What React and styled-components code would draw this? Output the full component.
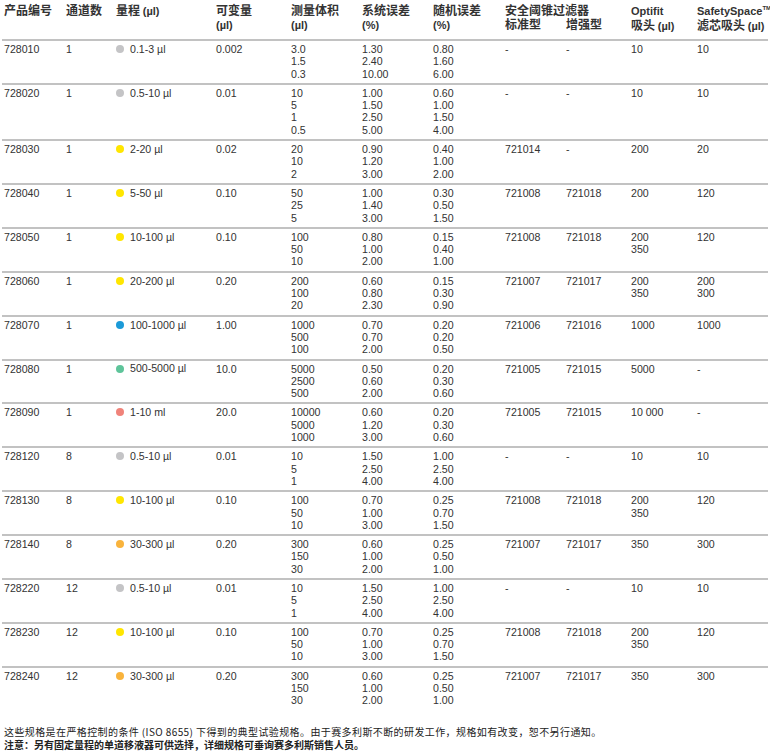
import styled, { createGlobalStyle } from "styled-components";

const GlobalStyle = createGlobalStyle`
  body {
    margin: 0;
    background: #fff;
    color: #333;
    font-family: "Liberation Sans", "Noto Sans CJK SC", sans-serif;
  }
`;

const COLS = "62px 50px 100px 75px 71px 71px 72px 61px 65px 66px 1fr";

const DOT = {
  gray: "#c4c4c6",
  yellow: "#ffe600",
  blue: "#1b9ad8",
  green: "#5ec49a",
  red: "#f0837a",
  orange: "#f9b33c"
};

const rows = [
  ["728010", "1", "gray", "0.1-3 µl", "0.002", ["3.0", "1.5", "0.3"], ["1.30", "2.40", "10.00"], ["0.80", "1.60", "6.00"], "-", "-", ["10"], ["10"]],
  ["728020", "1", "gray", "0.5-10 µl", "0.01", ["10", "5", "1", "0.5"], ["1.00", "1.50", "2.50", "5.00"], ["0.60", "1.00", "1.50", "4.00"], "-", "-", ["10"], ["10"]],
  ["728030", "1", "yellow", "2-20 µl", "0.02", ["20", "10", "2"], ["0.90", "1.20", "3.00"], ["0.40", "1.00", "2.00"], "721014", "-", ["200"], ["20"]],
  ["728040", "1", "yellow", "5-50 µl", "0.10", ["50", "25", "5"], ["1.00", "1.40", "3.00"], ["0.30", "0.50", "1.50"], "721008", "721018", ["200"], ["120"]],
  ["728050", "1", "yellow", "10-100 µl", "0.10", ["100", "50", "10"], ["0.80", "1.00", "2.00"], ["0.15", "0.40", "1.00"], "721008", "721018", ["200", "350"], ["120"]],
  ["728060", "1", "yellow", "20-200 µl", "0.20", ["200", "100", "20"], ["0.60", "0.80", "2.30"], ["0.15", "0.30", "0.90"], "721007", "721017", ["200", "350"], ["200", "300"]],
  ["728070", "1", "blue", "100-1000 µl", "1.00", ["1000", "500", "100"], ["0.70", "0.70", "2.00"], ["0.20", "0.20", "0.50"], "721006", "721016", ["1000"], ["1000"]],
  ["728080", "1", "green", "500-5000 µl", "10.0", ["5000", "2500", "500"], ["0.50", "0.60", "2.00"], ["0.20", "0.30", "0.60"], "721005", "721015", ["5000"], ["-"]],
  ["728090", "1", "red", "1-10 ml", "20.0", ["10000", "5000", "1000"], ["0.60", "1.20", "3.00"], ["0.20", "0.30", "0.60"], "721005", "721015", ["10 000"], ["-"]],
  ["728120", "8", "gray", "0.5-10 µl", "0.01", ["10", "5", "1"], ["1.50", "2.50", "4.00"], ["1.00", "2.50", "4.00"], "-", "-", ["10"], ["10"]],
  ["728130", "8", "yellow", "10-100 µl", "0.10", ["100", "50", "10"], ["0.70", "1.00", "3.00"], ["0.25", "0.70", "1.50"], "721008", "721018", ["200", "350"], ["120"]],
  ["728140", "8", "orange", "30-300 µl", "0.20", ["300", "150", "30"], ["0.60", "1.00", "2.00"], ["0.25", "0.50", "1.00"], "721007", "721017", ["350"], ["300"]],
  ["728220", "12", "gray", "0.5-10 µl", "0.01", ["10", "5", "1"], ["1.50", "2.50", "4.00"], ["1.00", "2.50", "4.00"], "-", "-", ["10"], ["10"]],
  ["728230", "12", "yellow", "10-100 µl", "0.10", ["100", "50", "10"], ["0.70", "1.00", "3.00"], ["0.25", "0.70", "1.50"], "721008", "721018", ["200", "350"], ["120"]],
  ["728240", "12", "orange", "30-300 µl", "0.20", ["300", "150", "30"], ["0.60", "1.00", "2.00"], ["0.25", "0.50", "1.00"], "721007", "721017", ["350"], ["300"]]
];

const Page = styled.div`
  padding: 3px 2px 0 2px;
`;

const Head = styled.div`
  display: grid;
  grid-template-columns: ${COLS};
  padding: 0 2px 6px 2px;
  font-family: "Noto Sans CJK SC", sans-serif;
  font-size: 12px;
  font-weight: 700;
  line-height: 14px;
  color: #333;
`;

const HeadCell = styled.div`
  grid-column: ${({ $span }) => ($span ? `span ${$span}` : "auto")};
  white-space: nowrap;
`;

const Latin = styled.span`
  font-family: "Liberation Sans", sans-serif;
  font-size: 11px;
`;

const SubHead = styled.div`
  display: grid;
  grid-template-columns: 61px 1fr;
`;

const Tm = styled.sup`
  font-size: 6px;
  vertical-align: 5px;
  line-height: 0;
`;

const Row = styled.div`
  display: grid;
  grid-template-columns: ${COLS};
  border-top: 2px solid #c2c2c2;
  padding: 2px 2px 3px 2px;
  font-size: 10.6px;
  line-height: 12.3px;
`;

const Cell = styled.div`
  display: flex;
  flex-direction: column;
  white-space: nowrap;
`;

const Range = styled.div`
  display: flex;
  align-items: center;
  gap: 6px;
  height: 12px;
  white-space: nowrap;
`;

const Dot = styled.span`
  width: 8px;
  height: 8px;
  border-radius: 50%;
  background: ${({ $color }) => DOT[$color]};
`;

const Notes = styled.div`
  margin-top: 15px;
  padding-left: 2px;
  font-family: "Noto Sans CJK SC", sans-serif;
  font-size: 10px;
  line-height: 13px;
  color: #222;
`;

const Note = styled.div`
  font-weight: ${({ $bold }) => ($bold ? 700 : 400)};
  letter-spacing: ${({ $spacing }) => $spacing || 0}px;
  white-space: nowrap;
`;

const Lines = ({ items }) => (
  <Cell>
    {items.map((t, i) => (
      <span key={i}>{t}</span>
    ))}
  </Cell>
);

const App = () => (
  <Page>
    <GlobalStyle />
    <Head>
      <HeadCell>产品编号</HeadCell>
      <HeadCell>通道数</HeadCell>
      <HeadCell>
        量程 <Latin>(µl)</Latin>
      </HeadCell>
      <HeadCell>
        可变量
        <br />
        <Latin>(µl)</Latin>
      </HeadCell>
      <HeadCell>
        测量体积
        <br />
        <Latin>(µl)</Latin>
      </HeadCell>
      <HeadCell>
        系统误差
        <br />
        <Latin>(%)</Latin>
      </HeadCell>
      <HeadCell>
        随机误差
        <br />
        <Latin>(%)</Latin>
      </HeadCell>
      <HeadCell $span={2}>
        安全阈锥过滤器
        <SubHead>
          <span>标准型</span>
          <span>增强型</span>
        </SubHead>
      </HeadCell>
      <HeadCell>
        <Latin>Optifit</Latin>
        <br />
        吸头 <Latin>(µl)</Latin>
      </HeadCell>
      <HeadCell>
        <Latin>
          SafetySpace<Tm>TM</Tm>
        </Latin>
        <br />
        滤芯吸头 <Latin>(µl)</Latin>
      </HeadCell>
    </Head>
    {rows.map(r => (
      <Row key={r[0]}>
        <Cell>{r[0]}</Cell>
        <Cell>{r[1]}</Cell>
        <Range>
          <Dot $color={r[2]} />
          {r[3]}
        </Range>
        <Cell>{r[4]}</Cell>
        <Lines items={r[5]} />
        <Lines items={r[6]} />
        <Lines items={r[7]} />
        <Cell>{r[8]}</Cell>
        <Cell>{r[9]}</Cell>
        <Lines items={r[10]} />
        <Lines items={r[11]} />
      </Row>
    ))}
    <Notes>
      <Note $spacing={0.4}>
        这些规格是在严格控制的条件 (ISO 8655) 下得到的典型试验规格。由于赛多利斯不断的研发工作，规格如有改变，恕不另行通知。
      </Note>
      <Note $bold>注意：另有固定量程的单道移液器可供选择，详细规格可垂询赛多利斯销售人员。</Note>
    </Notes>
  </Page>
);

export default App;
